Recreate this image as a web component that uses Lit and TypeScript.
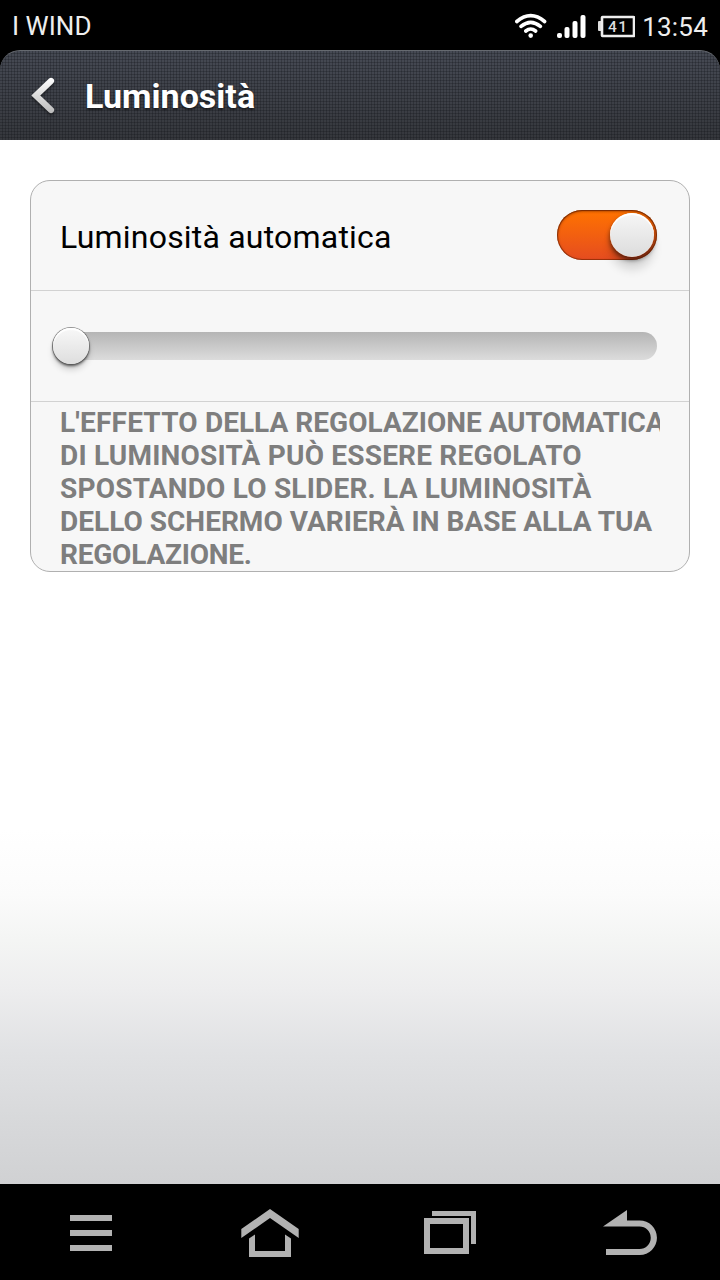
import { LitElement, html, css } from "lit";
import { customElement } from "lit/decorators.js";

@customElement("status-bar")
class StatusBar extends LitElement {
  static styles = css`
    :host { display: flex; height: 50px; flex: none; background: #000; color: #fff; font: 400 26px/50px Roboto, sans-serif; align-items: center; padding: 0 12px; box-sizing: border-box; }
    .carrier { flex: 1; font-size: 26px; letter-spacing: 0.05px; padding-top: 2px; color: #eee; }
    .icons { display: flex; align-items: center; height: 50px; }
    .wifi { width: 32px; height: 50px; margin-right: 10px; }
    .signal { width: 29px; height: 50px; margin-right: 12px; }
    .battery { width: 37px; height: 50px; }
    .pct { font: 500 15.5px Roboto, sans-serif; letter-spacing: 1.5px; }
    .time { padding: 3px 0 0 7px; letter-spacing: 0.22px; color: #eee; }
  `;
  render() {
    return html`
      <span class="carrier">I WIND</span>
      <span class="icons">
        <svg class="wifi" viewBox="515 0 32 50" fill="none" stroke="#fff" stroke-width="3.6" stroke-linecap="round">
          <path d="M516.8 21.5Q530.7 9.8 544.6 21.5M521 26.4Q530.7 18.2 540.4 26.4M525.8 31Q530.7 27 535.6 31" />
          <circle cx="530.7" cy="35.6" r="2.3" fill="#fff" stroke="none" />
        </svg>
        <svg class="signal" viewBox="557 0 29 50" fill="#fff">
          <rect x="557" y="33" width="5" height="5" rx="2" />
          <rect x="564.5" y="27" width="5" height="11" rx="2" />
          <rect x="572.5" y="21" width="5" height="17" rx="2" />
          <rect x="580.5" y="15" width="5" height="23" rx="2" />
        </svg>
        <svg class="battery" viewBox="598 0 37 50">
          <rect x="598" y="21" width="4" height="10" rx="1" fill="#ddd" />
          <rect x="602" y="17" width="32" height="19" rx=".5" fill="none" stroke="#eee" stroke-width="2.6" />
          <text class="pct" x="608" y="32" fill="#ddd">41</text>
        </svg>
      </span>
      <span class="time">13:54</span>
    `;
  }
}

@customElement("title-bar")
class TitleBar extends LitElement {
  static styles = css`
    :host { display: block; height: 90px; flex: none; background: linear-gradient(#000 45px, #fff 45px); }
    .bar { display: flex; align-items: center; height: 90px; box-sizing: border-box; border-top: 1px solid #666a70; border-radius: 20px 20px 0 0; padding-left: 30px;
      background:
        repeating-linear-gradient(90deg, transparent 0 2px, rgba(15,17,22,.27) 2px 3px),
        repeating-linear-gradient(transparent 0 2px, rgba(15,17,22,.27) 2px 3px),
        linear-gradient(#464a54, #35373c); }
    .back { width: 26px; height: 38px; margin-right: 29px; margin-top: 1px; overflow: visible; filter: drop-shadow(0 2px 1px rgba(0,0,0,.4)); }
    .title { font: 700 34px/44px Roboto, sans-serif; color: #fff; letter-spacing: 0.02px; text-shadow: 0 2px 2px rgba(0,0,0,.5); }
  `;
  render() {
    return html`
      <div class="bar">
        <svg class="back" viewBox="30 77 26 38">
          <defs><linearGradient id="g" gradientUnits="userSpaceOnUse" x1="0" y1="78" x2="0" y2="113"><stop stop-color="#fff" /><stop offset="1" stop-color="#bbb" /></linearGradient></defs>
          <path d="M51 81L35.8 95.5L51 110" fill="none" stroke="url(#g)" stroke-width="6.2" stroke-linecap="round" />
        </svg>
        <span class="title">Luminosità</span>
      </div>
    `;
  }
}

@customElement("brightness-card")
class BrightnessCard extends LitElement {
  static styles = css`
    :host { display: block; box-sizing: border-box; height: 392px; margin: 40px 30px 0; border: 1px solid #b0b0b0; border-radius: 20px; background: #f7f7f7; font-family: Roboto, sans-serif; overflow: hidden; }
    .row { display: flex; align-items: center; box-sizing: border-box; border-bottom: 1px solid #d2d2d2; }
    .auto { height: 110px; padding: 0 32px 0 29px; justify-content: space-between; }
    .label { font-size: 32px; color: #000; padding-top: 3px; letter-spacing: 0.2px; }
    .toggle { display: flex; justify-content: flex-end; box-sizing: border-box; width: 100px; height: 50px; margin-bottom: 2px; border-radius: 25px; padding: 3px; background: linear-gradient(#ff7300, #e54c20); box-shadow: inset 0 1px 3px rgba(90,25,0,.8), inset 0 0 0 1px rgba(120,40,0,.6); }
    .knob { width: 44px; height: 44px; border-radius: 50%; background: linear-gradient(#f6f6f6, #dcdcdc); box-shadow: inset 0 2px 1px #fff, 0 3px 5px rgba(0,0,0,.6), 0 13px 10px rgba(0,0,0,.13); }
    .level { height: 111px; padding: 0 32px 0 21px; }
    .track { display: flex; align-items: center; flex: 1; height: 28px; border-radius: 14px; background: linear-gradient(#b5b5b5, #dcdcdc); }
    .thumb { width: 36px; height: 36px; flex: none; margin-left: 1px; border-radius: 50%; background: linear-gradient(#f8f8f8, #dedede); box-shadow: inset 0 2px 1px #fff, 0 0 0 1px rgba(90,90,90,.6), 0 2px 3px rgba(0,0,0,.65), 0 6px 6px rgba(0,0,0,.15); }
    .help { margin: 4px 29px 0; overflow: hidden; white-space: nowrap; font-size: 28px; font-weight: 700; line-height: 33px; color: #7e7e7e; }
    .line { display: block; }
    .wide { letter-spacing: 0.2px; }
    .even { letter-spacing: 0.02px; }
    .tight { letter-spacing: -0.22px; }
  `;
  render() {
    return html`
      <div class="row auto"><span class="label">Luminosità automatica</span><div class="toggle"><div class="knob"></div></div></div>
      <div class="row level"><div class="track"><div class="thumb"></div></div></div>
      <div class="help">
        <span class="line"><span class="wide">L'EFFETTO </span><span class="even">DELLA REGOLAZIONE</span><span class="tight"> AUTOMATICA</span></span>
        <span class="line wide">DI LUMINOSITÀ PUÒ ESSERE REGOLATO</span>
        <span class="line wide">SPOSTANDO LO SLIDER. LA LUMINOSITÀ</span>
        <span class="line even">DELLO SCHERMO VARIERÀ IN BASE ALLA TUA</span>
        <span class="line tight">REGOLAZIONE.</span>
      </div>
    `;
  }
}

@customElement("nav-bar")
class NavBar extends LitElement {
  static styles = css`
    :host { display: grid; grid-template-columns: 182px 178px 180px 180px; height: 96px; flex: none; background: #000; }
    .key { width: 100%; height: 96px; display: block; fill: #b2b2b2; }
  `;
  render() {
    return html`
      <svg class="key" viewBox="0 1184 182 96"><path d="M70 1215h42v6H70zM70 1230h42v6H70zM70 1245h42v6H70z" /></svg>
      <svg class="key" viewBox="182 1184 178 96"><path d="M270 1209L298.7 1229V1238L270 1218L241.3 1238V1229ZM249 1238.5L255 1234.5V1251H285V1234.5L291 1238.5V1257H249Z" /></svg>
      <svg class="key" viewBox="360 1184 180 96"><path fill-rule="evenodd" d="M424 1218h45v36h-45zM430 1224v24h33v-24z" /><path d="M432 1211h44v33h-5v-28h-39z" /></svg>
      <svg class="key" viewBox="540 1184 180 96"><path d="M603 1226.5L627 1210V1220.5H639.7A17.25 17.25 0 0 1 639.7 1255H606V1249H639.5A11.25 11.25 0 0 0 639.5 1226.5Z" /></svg>
    `;
  }
}

@customElement("app-root")
class AppRoot extends LitElement {
  static styles = css`
    :host { display: flex; flex-direction: column; height: 1280px; width: 720px; overflow: hidden; background: #000; }
    .page { flex: 1; display: flow-root; background: linear-gradient(#fff 690px, #fbfbfb 755px, #f4f5f4 800px, #ededee 850px, #e1e2e4 910px, #d7d8da 985px, #d0d1d3 1044px); }
  `;
  render() {
    return html`
      <status-bar></status-bar>
      <title-bar></title-bar>
      <div class="page"><brightness-card></brightness-card></div>
      <nav-bar></nav-bar>
    `;
  }
}
